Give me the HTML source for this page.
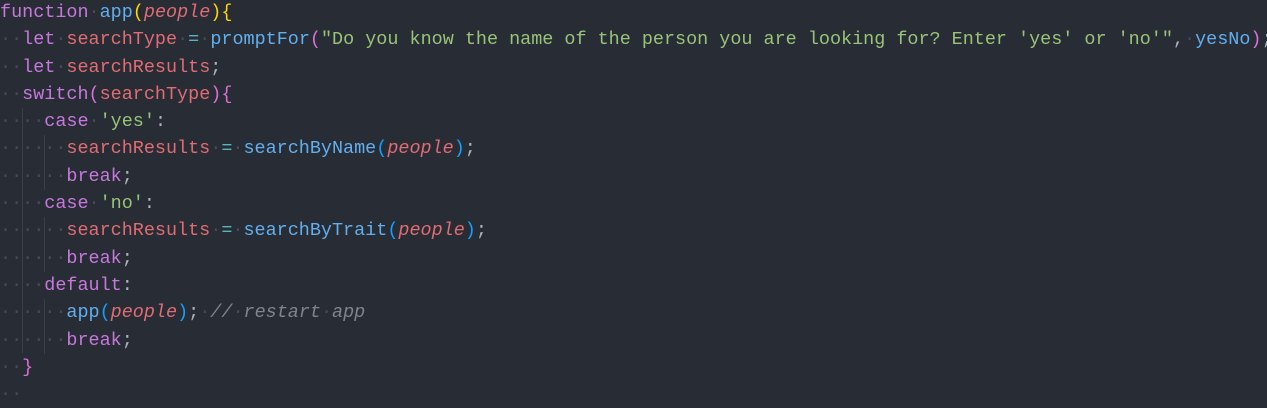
<!DOCTYPE html>
<html><head><style>
html,body{margin:0;padding:0;background:#282c34;width:1267px;height:400px;overflow:hidden}
#c{position:absolute;left:0;top:-1px;font-family:"Liberation Mono",monospace;font-size:18.45px;line-height:27.3px;color:#abb2bf}
.l{height:27.3px;white-space:pre}
.k{color:#c678dd}.v{color:#e06c75}.f{color:#61afef}.s{color:#98c379}.o{color:#56b6c2}
.p{color:#e06c75;font-style:italic}.cm{color:#7f848e;font-style:italic}
.y{color:#ffd700}.pk{color:#da70d6}.b{color:#179fff}
.d{color:#454b57}
.g{position:absolute;width:1px;background:#3b4048}
</style></head><body>
<div class="g" style="left:22px;top:108px;height:245px"></div>
<div class="g" style="left:44px;top:135px;height:55px"></div>
<div class="g" style="left:44px;top:217px;height:55px"></div>
<div class="g" style="left:44px;top:299px;height:55px"></div>
<div id="c"><div class="l"><span class="k">function</span><span class="d">·</span><span class="f">app</span><span class="y">(</span><span class="p">people</span><span class="y">){</span></div><div class="l"><span class="d">··</span><span class="k">let</span><span class="d">·</span><span class="v">searchType</span><span class="d">·</span><span class="o">=</span><span class="d">·</span><span class="f">promptFor</span><span class="pk">(</span><span class="s">"Do you know the name of the person you are looking for? Enter 'yes' or 'no'"</span>,<span class="d">·</span><span class="f">yesNo</span><span class="pk">)</span>;</div><div class="l"><span class="d">··</span><span class="k">let</span><span class="d">·</span><span class="v">searchResults</span>;</div><div class="l"><span class="d">··</span><span class="k">switch</span><span class="pk">(</span><span class="v">searchType</span><span class="pk">){</span></div><div class="l"><span class="d">····</span><span class="k">case</span><span class="d">·</span><span class="s">'yes'</span>:</div><div class="l"><span class="d">······</span><span class="v">searchResults</span><span class="d">·</span><span class="o">=</span><span class="d">·</span><span class="f">searchByName</span><span class="b">(</span><span class="p">people</span><span class="b">)</span>;</div><div class="l"><span class="d">······</span><span class="k">break</span>;</div><div class="l"><span class="d">····</span><span class="k">case</span><span class="d">·</span><span class="s">'no'</span>:</div><div class="l"><span class="d">······</span><span class="v">searchResults</span><span class="d">·</span><span class="o">=</span><span class="d">·</span><span class="f">searchByTrait</span><span class="b">(</span><span class="p">people</span><span class="b">)</span>;</div><div class="l"><span class="d">······</span><span class="k">break</span>;</div><div class="l"><span class="d">····</span><span class="k">default</span>:</div><div class="l"><span class="d">······</span><span class="f">app</span><span class="b">(</span><span class="p">people</span><span class="b">)</span>;<span class="d">·</span><span class="cm">//<span class="d">·</span>restart<span class="d">·</span>app</span></div><div class="l"><span class="d">······</span><span class="k">break</span>;</div><div class="l"><span class="d">··</span><span class="pk">}</span></div><div class="l"><span class="d">··</span></div></div>
</body></html>
